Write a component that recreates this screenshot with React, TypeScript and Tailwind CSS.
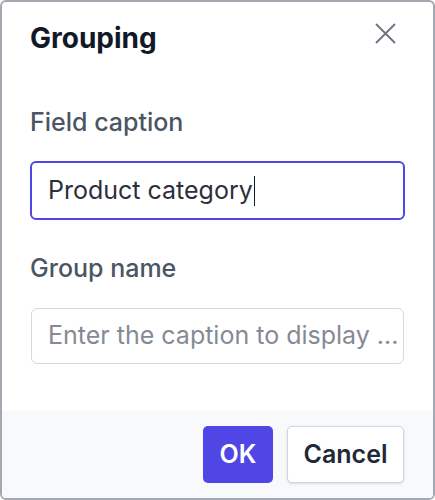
import React from "react";

export default function App() {
  return (
    <div
      className="w-[435px] h-[500px] bg-white border-2 border-[#a4a8b0] rounded-[6px] flex flex-col overflow-hidden"
      style={{ fontFamily: "Inter, 'Noto Sans', sans-serif" }}
    >
      <div className="flex items-start justify-between pt-[19px] pl-[28px] pr-[28px]">
        <h1 className="text-[28px] leading-[34px] font-bold text-[#111827]">Grouping</h1>
        <button className="mt-[2px] mr-[9px] text-[#6b7280]" aria-label="Close">
          <svg width="21" height="21" viewBox="0 0 21 21" fill="none" stroke="currentColor" strokeWidth="1.8" strokeLinecap="round">
            <path d="M1.5 1.5L19.5 19.5M19.5 1.5L1.5 19.5" />
          </svg>
        </button>
      </div>

      <div className="flex-1 flex flex-col px-[28px]">
        <label className="mt-[51px] text-[25px] leading-[32px] font-medium text-[#4b5563]">Field caption</label>
        <div className="mt-[23px] h-[59px] border-2 border-[#4f46e5] rounded-[6px] flex items-center px-[16px] text-[25px] text-[#2b303b]">
          <span>Product category</span>
          <span className="ml-[1px] w-[1.5px] h-[30px] bg-[#111827]" />
        </div>
        <label className="mt-[32px] text-[25px] leading-[32px] font-medium text-[#4b5563]">Group name</label>
        <div className="mt-[24px] ml-[1px] mr-[1px] h-[56px] border border-[#d6d9de] rounded-[6px] flex items-center px-[16px] text-[25px] text-[#858a94] whitespace-nowrap">
          <span>Enter the caption to display ...</span>
        </div>
      </div>

      <div className="h-[87px] bg-[#f8f9fb] flex items-center justify-end gap-[14px] pr-[29px]">
        <button className="w-[70px] h-[57px] rounded-[5px] bg-[#4f46e5] text-white text-[25px] font-semibold">OK</button>
        <button className="w-[117px] h-[57px] rounded-[5px] bg-white border border-[#d1d5db] shadow-sm text-[#1f2937] text-[25px] font-semibold">Cancel</button>
      </div>
    </div>
  );
}
